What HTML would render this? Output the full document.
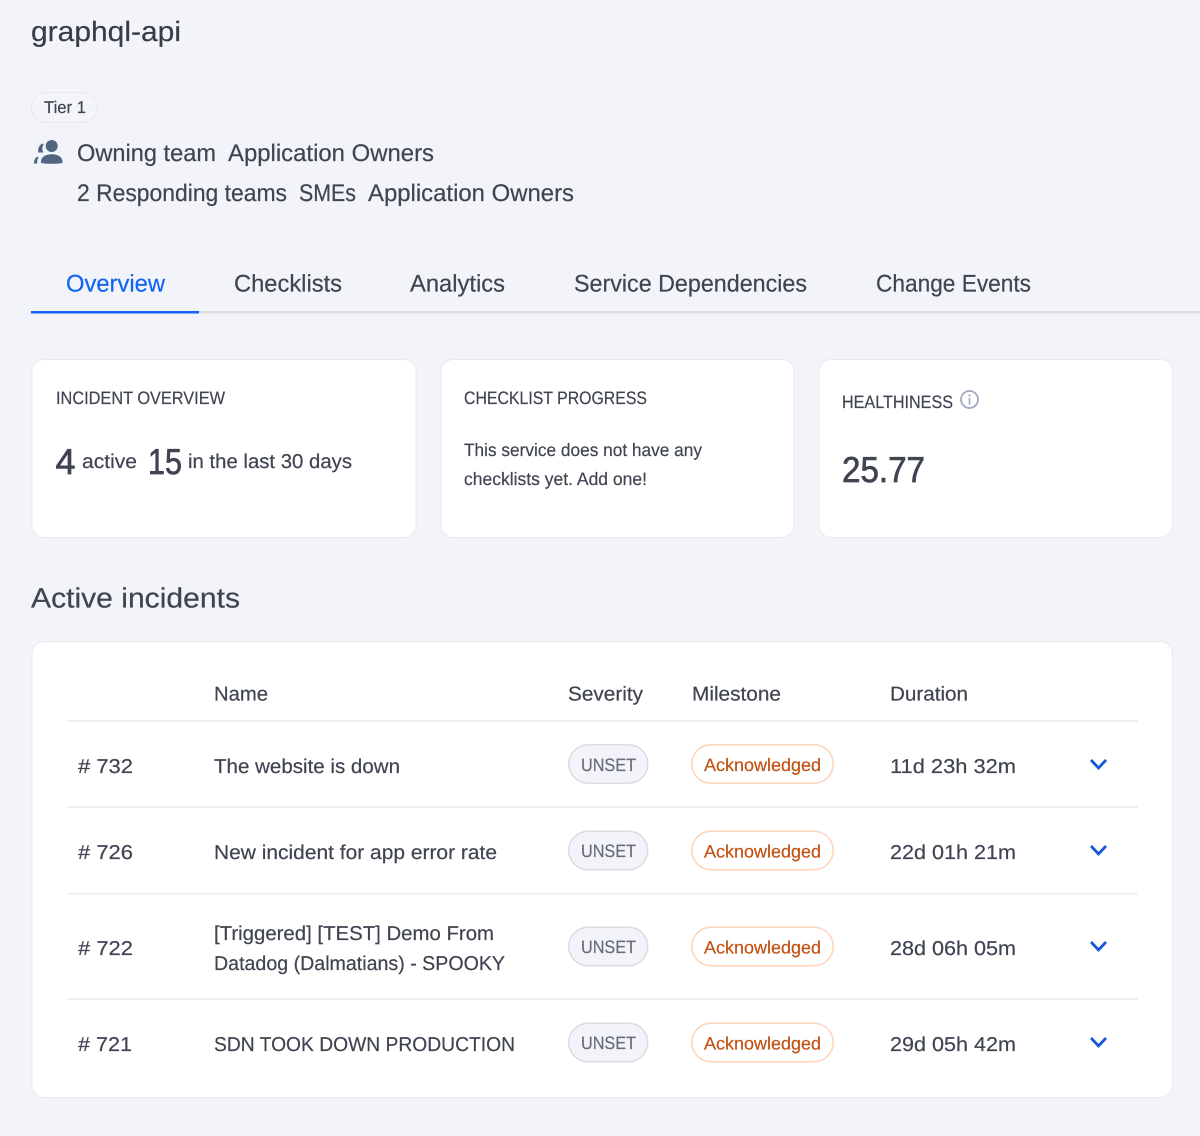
<!DOCTYPE html>
<html><head><meta charset="utf-8"><style>
html,body{margin:0;padding:0;background:#f2f4f9;width:1200px;height:1136px;overflow:hidden}
svg{display:block}
text{font-family:"Liberation Sans",sans-serif;color:#3f4450;fill:currentColor;stroke:currentColor;stroke-width:.2;text-rendering:geometricPrecision}
.big{stroke-width:.7}
</style></head><body>
<svg xmlns="http://www.w3.org/2000/svg" width="1200" height="1136" viewBox="0 0 1200 1136">
<rect width="1200" height="1136" fill="#f2f4f9"/>
<text x="31" y="41" font-size="28" textLength="150" lengthAdjust="spacingAndGlyphs" style="color:#383c47">graphql-api</text>
<rect x="31.500" y="92.500" width="66" height="30" rx="15" fill="#f4f5f9" stroke="#e8e9ee"/>
<text x="44" y="113" font-size="17" textLength="42" lengthAdjust="spacingAndGlyphs">Tier 1</text>
<g fill="#536583"><circle cx="51.700" cy="146" r="6"/><path d="M41 163C40.500 157.500 45 154.300 51.700 154.300C58.500 154.300 63 157.500 62.500 163C56 164 47 164 41 163Z"/><path d="M42.500 143.500C39.500 145 37.500 148 38.300 152.500L43.500 152.500C41.800 149.500 42 146.500 43.800 144.500Z"/><path d="M37.500 156.500C35 158 33.700 160.500 34 163.500L37.500 163.500C36.800 161.500 37.200 159.500 38.500 157.800Z"/></g>
<g font-size="24">
<text x="77" y="161" textLength="139" lengthAdjust="spacingAndGlyphs">Owning team</text>
<text x="228" y="161" textLength="206" lengthAdjust="spacingAndGlyphs">Application Owners</text>
<text x="77" y="201" textLength="210" lengthAdjust="spacingAndGlyphs">2 Responding teams</text>
<text x="299" y="201" textLength="57" lengthAdjust="spacingAndGlyphs">SMEs</text>
<text x="368" y="201" textLength="206" lengthAdjust="spacingAndGlyphs">Application Owners</text>
<text x="66" y="291.500" textLength="99" lengthAdjust="spacingAndGlyphs" style="color:#1164f0">Overview</text>
<text x="234" y="291.500" textLength="108" lengthAdjust="spacingAndGlyphs">Checklists</text>
<text x="410" y="291.500" textLength="95" lengthAdjust="spacingAndGlyphs">Analytics</text>
<text x="574" y="291.500" textLength="233" lengthAdjust="spacingAndGlyphs">Service Dependencies</text>
<text x="876" y="291.500" textLength="155" lengthAdjust="spacingAndGlyphs">Change Events</text>
</g>
<rect x="31" y="311" width="1169" height="2.500" fill="#dcdee4"/>
<rect x="31" y="311" width="168" height="2.500" fill="#1164f0"/>
<g fill="#fff" stroke="#e7e9ef"><rect x="32" y="359.500" width="384" height="178" rx="12"/><rect x="441" y="359.500" width="353" height="178" rx="12"/><rect x="819" y="359.500" width="353.500" height="178" rx="12"/><rect x="32" y="641.500" width="1140.500" height="456" rx="12"/></g>
<g font-size="18">
<text x="56" y="404" textLength="169" lengthAdjust="spacingAndGlyphs">INCIDENT OVERVIEW</text>
<text x="464" y="404" textLength="183" lengthAdjust="spacingAndGlyphs">CHECKLIST PROGRESS</text>
<text x="464" y="456" textLength="238" lengthAdjust="spacingAndGlyphs">This service does not have any</text>
<text x="464" y="485" textLength="183" lengthAdjust="spacingAndGlyphs">checklists yet. Add one!</text>
<text x="842" y="408" textLength="111" lengthAdjust="spacingAndGlyphs">HEALTHINESS</text>
</g>
<text class="big" x="55.500" y="474" font-size="36" textLength="20" lengthAdjust="spacingAndGlyphs">4</text>
<text x="82" y="468" font-size="20" textLength="55" lengthAdjust="spacingAndGlyphs">active</text>
<text class="big" x="148" y="474" font-size="36" textLength="34" lengthAdjust="spacingAndGlyphs">15</text>
<text x="188" y="468" font-size="20" textLength="164" lengthAdjust="spacingAndGlyphs">in the last 30 days</text>
<circle cx="969.500" cy="399.500" r="8.500" fill="none" stroke="#a3a8c2" stroke-width="1.800"/>
<circle cx="969.500" cy="395.500" r="1.100" fill="#a3a8c2"/><rect x="968.700" y="398" width="1.600" height="6.500" fill="#a3a8c2"/>
<text class="big" x="842" y="482" font-size="36" textLength="83" lengthAdjust="spacingAndGlyphs">25.77</text>
<text x="31" y="607.500" font-size="28" textLength="209" lengthAdjust="spacingAndGlyphs">Active incidents</text>
<g font-size="20">
<text x="214" y="700.500" textLength="54" lengthAdjust="spacingAndGlyphs">Name</text>
<text x="568" y="700.500" textLength="75" lengthAdjust="spacingAndGlyphs">Severity</text>
<text x="692" y="700.500" textLength="89" lengthAdjust="spacingAndGlyphs">Milestone</text>
<text x="890" y="700.500" textLength="78" lengthAdjust="spacingAndGlyphs">Duration</text>
<text x="78" y="773" textLength="55" lengthAdjust="spacingAndGlyphs"># 732</text>
<text x="78" y="859" textLength="55" lengthAdjust="spacingAndGlyphs"># 726</text>
<text x="78" y="955" textLength="55" lengthAdjust="spacingAndGlyphs"># 722</text>
<text x="78" y="1051" textLength="54" lengthAdjust="spacingAndGlyphs"># 721</text>
<text x="214" y="773" textLength="186" lengthAdjust="spacingAndGlyphs">The website is down</text>
<text x="214" y="859" textLength="283" lengthAdjust="spacingAndGlyphs">New incident for app error rate</text>
<text x="214" y="940" textLength="280" lengthAdjust="spacingAndGlyphs">[Triggered] [TEST] Demo From</text>
<text x="214" y="970" textLength="291" lengthAdjust="spacingAndGlyphs">Datadog (Dalmatians) - SPOOKY</text>
<text x="214" y="1051" textLength="301" lengthAdjust="spacingAndGlyphs">SDN TOOK DOWN PRODUCTION</text>
<text x="890" y="773" textLength="126" lengthAdjust="spacingAndGlyphs">11d 23h 32m</text>
<text x="890" y="859" textLength="126" lengthAdjust="spacingAndGlyphs">22d 01h 21m</text>
<text x="890" y="955" textLength="126" lengthAdjust="spacingAndGlyphs">28d 06h 05m</text>
<text x="890" y="1051" textLength="126" lengthAdjust="spacingAndGlyphs">29d 05h 42m</text>
</g>
<g fill="#e9ebf0"><rect x="67" y="720" width="1071" height="1.500"/><rect x="67" y="806.500" width="1071" height="1.500"/><rect x="67" y="893" width="1071" height="1.500"/><rect x="67" y="998.500" width="1071" height="1.500"/></g>
<g fill="#f2f4f9" stroke="#d9dbe2" stroke-width="1.500"><rect x="568.750" y="744.750" width="79" height="38.500" rx="19.250"/><rect x="568.750" y="831.250" width="79" height="38.500" rx="19.250"/><rect x="568.750" y="927.250" width="79" height="38.500" rx="19.250"/><rect x="568.750" y="1023.250" width="79" height="38.500" rx="19.250"/></g>
<g fill="#fff" stroke="#fdd2b6" stroke-width="1.500"><rect x="691.750" y="744.750" width="141.500" height="38.500" rx="19.250"/><rect x="691.750" y="831.250" width="141.500" height="38.500" rx="19.250"/><rect x="691.750" y="927.250" width="141.500" height="38.500" rx="19.250"/><rect x="691.750" y="1023.250" width="141.500" height="38.500" rx="19.250"/></g>
<g font-size="18">
<text x="581" y="771" textLength="55" lengthAdjust="spacingAndGlyphs" style="color:#696a7c">UNSET</text>
<text x="581" y="857" textLength="55" lengthAdjust="spacingAndGlyphs" style="color:#696a7c">UNSET</text>
<text x="581" y="953" textLength="55" lengthAdjust="spacingAndGlyphs" style="color:#696a7c">UNSET</text>
<text x="581" y="1049" textLength="55" lengthAdjust="spacingAndGlyphs" style="color:#696a7c">UNSET</text>
<text x="704" y="771" textLength="117" lengthAdjust="spacingAndGlyphs" style="color:#c2500f">Acknowledged</text>
<text x="704" y="857.500" textLength="117" lengthAdjust="spacingAndGlyphs" style="color:#c2500f">Acknowledged</text>
<text x="704" y="953.500" textLength="117" lengthAdjust="spacingAndGlyphs" style="color:#c2500f">Acknowledged</text>
<text x="704" y="1049.500" textLength="117" lengthAdjust="spacingAndGlyphs" style="color:#c2500f">Acknowledged</text>
</g>
<g fill="none" stroke="#1558d6" stroke-width="2.800"><path d="M1091 760L1098.500 768L1106 760"/><path d="M1091 846L1098.500 854L1106 846"/><path d="M1091 942L1098.500 950L1106 942"/><path d="M1091 1038L1098.500 1046L1106 1038"/></g>
</svg>
</body></html>
